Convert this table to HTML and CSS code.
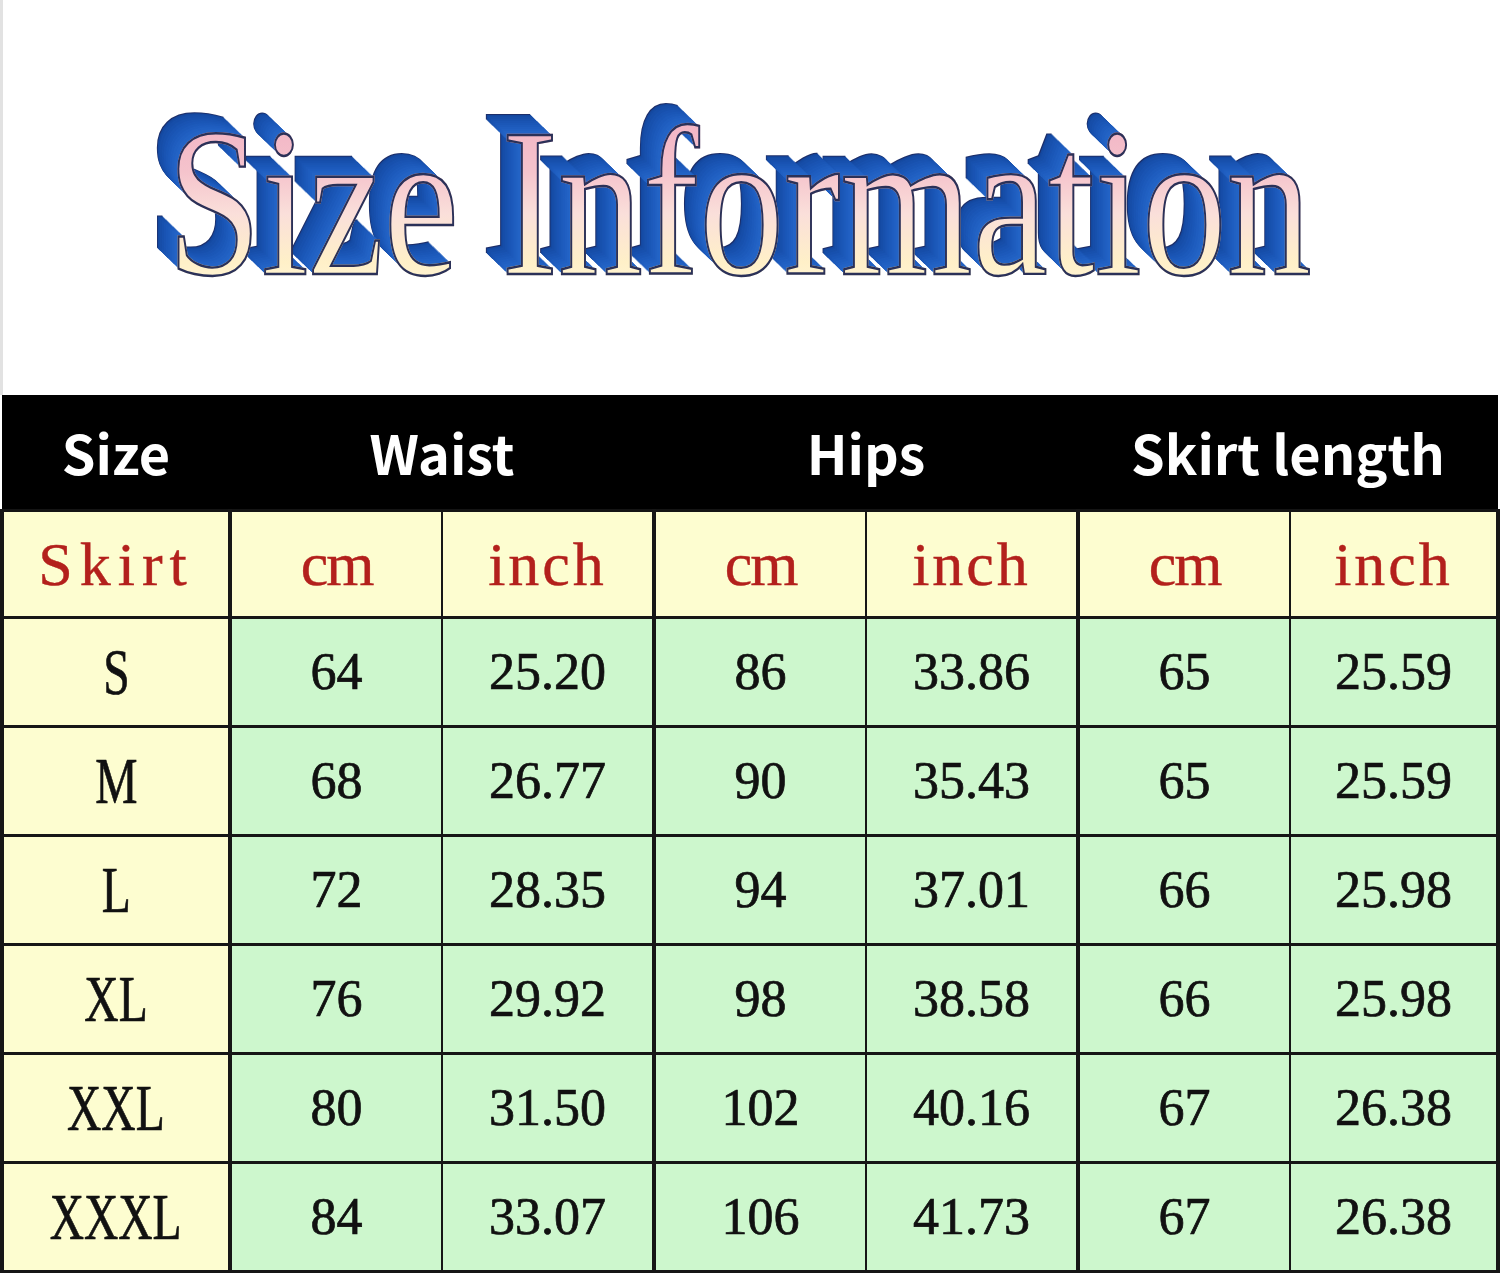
FILE: index.html
```html
<!DOCTYPE html>
<html lang="en">
<head>
<meta charset="utf-8">
<title>Size Information</title>
<link rel="stylesheet" href="styles.css">
</head>
<body>
<header class="banner">
  <h1 class="title" data-text="Size Information">Size Information</h1>
</header>
<table class="chart">
  <colgroup>
    <col class="c-size">
    <col class="c-data">
    <col class="c-data">
    <col class="c-data">
    <col class="c-data">
    <col class="c-data">
    <col>
  </colgroup>
  <thead>
    <tr class="head">
      <th>Size</th>
      <th colspan="2">Waist</th>
      <th colspan="2">Hips</th>
      <th colspan="2">Skirt length</th>
    </tr>
  </thead>
  <tbody>
    <tr class="units">
      <td class="label">Skirt</td>
      <td class="unit cm">cm</td>
      <td class="unit">inch</td>
      <td class="unit cm">cm</td>
      <td class="unit">inch</td>
      <td class="unit cm">cm</td>
      <td class="unit">inch</td>
    </tr>
    <tr>
      <td class="sz"><span>S</span></td>
      <td>64</td><td>25.20</td><td>86</td><td>33.86</td><td>65</td><td>25.59</td>
    </tr>
    <tr>
      <td class="sz"><span>M</span></td>
      <td>68</td><td>26.77</td><td>90</td><td>35.43</td><td>65</td><td>25.59</td>
    </tr>
    <tr>
      <td class="sz"><span>L</span></td>
      <td>72</td><td>28.35</td><td>94</td><td>37.01</td><td>66</td><td>25.98</td>
    </tr>
    <tr>
      <td class="sz"><span>XL</span></td>
      <td>76</td><td>29.92</td><td>98</td><td>38.58</td><td>66</td><td>25.98</td>
    </tr>
    <tr>
      <td class="sz"><span>XXL</span></td>
      <td>80</td><td>31.50</td><td>102</td><td>40.16</td><td>67</td><td>26.38</td>
    </tr>
    <tr>
      <td class="sz"><span>XXXL</span></td>
      <td>84</td><td>33.07</td><td>106</td><td>41.73</td><td>67</td><td>26.38</td>
    </tr>
  </tbody>
</table>
</body>
</html>
```
FILE: styles.css
```css
html, body {
  margin: 0;
  padding: 0;
  background: #ffffff;
}
body {
  width: 1500px;
  height: 1276px;
  overflow: hidden;
  font-family: "Liberation Serif", serif;
}

.banner {
  box-sizing: border-box;
  height: 395px;
  border-left: 3px solid #e2e2e2;
  padding: 97px 24px 0 0;
  display: flex;
  justify-content: center;
  align-items: flex-start;
}

.title {
  position: relative;
  flex-shrink: 0;
  margin: 0;
  white-space: nowrap;
  font-family: "Liberation Serif", serif;
  font-weight: 400;
  font-size: 212px;
  line-height: 1;
  color: #2063c4;
  transform: scaleX(0.8);
  text-shadow:
    -0.4px -0.4px 0 #2a2f60,
    -1.3px -1px 0 #2466c8,
    -2.6px -2px 0 #2466c8,
    -3.9px -3px 0 #2363c5,
    -5.2px -4px 0 #2363c5,
    -6.5px -5px 0 #2160c2,
    -7.8px -6px 0 #2160c2,
    -9.1px -7px 0 #1f5dbf,
    -10.4px -8px 0 #1f5dbf,
    -11.7px -9px 0 #1d5abb,
    -13px -10px 0 #1d5abb,
    -14.3px -11px 0 #1b57b7,
    -15.6px -12px 0 #1b57b7,
    -16.9px -13px 0 #1a54b3,
    -18.2px -14px 0 #1a54b3,
    -19.5px -15px 0 #1851ae,
    -20.8px -16px 0 #1851ae,
    -22.1px -17px 0 #174ea9,
    -23.4px -18px 0 #174ea9,
    -24.7px -19px 0 #154ba4,
    -26px -20px 0 #14479e,
    -27px -21px 0 #1d2f6a;
}
.title::after {
  content: attr(data-text);
  position: absolute;
  left: 0;
  top: 0;
  color: transparent;
  text-shadow: none;
  background: linear-gradient(180deg, #f0aec2 0%, #f5c3cc 35%, #fadfda 55%, #fff0c8 78%, #fffae4 100%);
  -webkit-background-clip: text;
  background-clip: text;
  -webkit-text-stroke: 2.4px #2b3158;
}

.chart {
  width: 1500px;
  border-collapse: collapse;
  table-layout: fixed;
}
.c-size { width: 228px; }
.c-data { width: 212px; }

.head th {
  background: #000000;
  color: #ffffff;
  height: 114px;
  padding: 0;
  font-family: "Noto Sans CJK SC", "Open Sans", sans-serif;
  font-weight: 700;
  font-size: 54px;
  line-height: 1;
  text-align: center;
  vertical-align: middle;
  border: 0;
  border-bottom: 3px solid #141414;
}

.chart td {
  height: 106px;
  padding: 0;
  text-align: center;
  vertical-align: middle;
  background: #cdf7cd;
  color: #111111;
  font-family: "Liberation Serif", serif;
  font-size: 52px;
  line-height: 1;
  -webkit-text-stroke: 0.7px #111111;
  border-top: 3px solid #161616;
  border-bottom: 3px solid #161616;
  border-left: 2px solid #161616;
  border-right: 2px solid #161616;
}
.chart td:first-child {
  border-left: 4px solid #161616;
  border-right: 4px solid #161616;
  background: #fdfdd0;
}
.chart td:nth-child(3),
.chart td:nth-child(5) {
  border-right: 4px solid #161616;
}
.chart td:last-child {
  border-right: 4px solid #161616;
}

.units td {
  background: #fdfdd0;
  color: #b3201c;
  -webkit-text-stroke: 0.4px #b3201c;
  font-size: 62px;
  height: 104px;
}
.units .unit {
  letter-spacing: 3px;
}
.units .cm {
  letter-spacing: -2px;
}
.units .label {
  letter-spacing: 7px;
}

.sz span {
  display: inline-block;
  font-size: 66px;
  transform: scaleX(0.72);
}
```
